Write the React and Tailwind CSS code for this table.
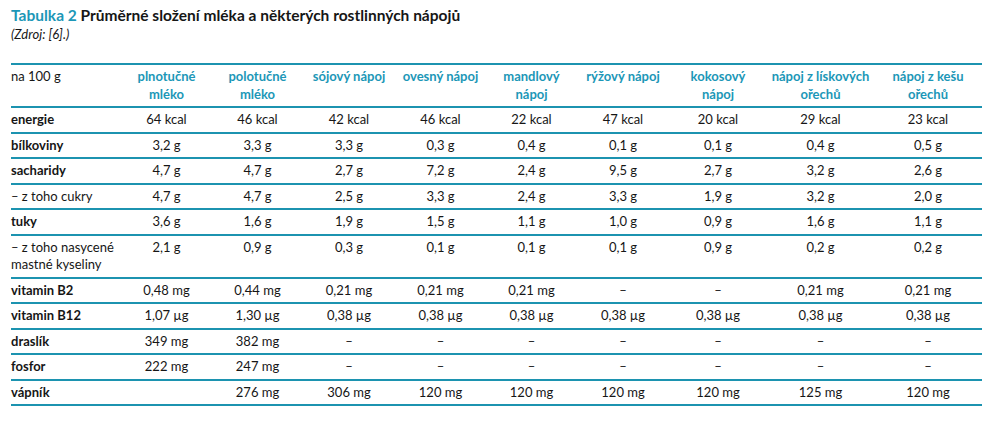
import React from "react";

const cols = [
  ["plnotučné", "mléko"],
  ["polotučné", "mléko"],
  ["sójový nápoj"],
  ["ovesný nápoj"],
  ["mandlový", "nápoj"],
  ["rýžový nápoj"],
  ["kokosový", "nápoj"],
  ["nápoj z lískových", "ořechů"],
  ["nápoj z kešu", "ořechů"],
];

const widths = [110, 91, 91, 92, 91, 91, 92, 98, 107, 108];

const rows = [
  { label: "energie", bold: true, v: ["64 kcal", "46 kcal", "42 kcal", "46 kcal", "22 kcal", "47 kcal", "20 kcal", "29 kcal", "23 kcal"] },
  { label: "bílkoviny", bold: true, v: ["3,2 g", "3,3 g", "3,3 g", "0,3 g", "0,4 g", "0,1 g", "0,1 g", "0,4 g", "0,5 g"] },
  { label: "sacharidy", bold: true, v: ["4,7 g", "4,7 g", "2,7 g", "7,2 g", "2,4 g", "9,5 g", "2,7 g", "3,2 g", "2,6 g"] },
  { label: "– z toho cukry", bold: false, v: ["4,7 g", "4,7 g", "2,5 g", "3,3 g", "2,4 g", "3,3 g", "1,9 g", "3,2 g", "2,0 g"] },
  { label: "tuky", bold: true, v: ["3,6 g", "1,6 g", "1,9 g", "1,5 g", "1,1 g", "1,0 g", "0,9 g", "1,6 g", "1,1 g"] },
  { label: ["– z toho nasycené", "mastné kyseliny"], bold: false, v: ["2,1 g", "0,9 g", "0,3 g", "0,1 g", "0,1 g", "0,1 g", "0,9 g", "0,2 g", "0,2 g"] },
  { label: "vitamin B2", bold: true, v: ["0,48 mg", "0,44 mg", "0,21 mg", "0,21 mg", "0,21 mg", "–", "–", "0,21 mg", "0,21 mg"] },
  { label: "vitamin B12", bold: true, v: ["1,07 µg", "1,30 µg", "0,38 µg", "0,38 µg", "0,38 µg", "0,38 µg", "0,38 µg", "0,38 µg", "0,38 µg"] },
  { label: "draslík", bold: true, v: ["349 mg", "382 mg", "–", "–", "–", "–", "–", "–", "–"] },
  { label: "fosfor", bold: true, v: ["222 mg", "247 mg", "–", "–", "–", "–", "–", "–", "–"] },
  { label: "vápník", bold: true, v: ["", "276 mg", "306 mg", "120 mg", "120 mg", "120 mg", "120 mg", "125 mg", "120 mg"] },
];

export default function App() {
  return (
    <div
      className="w-[991px] h-[422px] bg-white pl-[11px] pt-[5px] text-[#161616]"
      style={{ fontFamily: "Lato, 'Noto Sans', sans-serif" }}
    >
      <div className="text-[15.5px] leading-[20px] font-bold">
        <span className="text-[#1c97b7]">Tabulka 2</span> Průměrné složení mléka a některých rostlinných nápojů
      </div>
      <div className="text-[13px] leading-[18px] italic">(Zdroj: [6].)</div>
      <table className="mt-[20px] table-fixed border-collapse w-[971px] text-[13px] leading-[17.5px]">
        <colgroup>
          {widths.map((w, i) => (
            <col key={i} style={{ width: w }} />
          ))}
        </colgroup>
        <thead>
          <tr className="border-t-2 border-b-2 border-[#1c93b0] align-top">
            <th className="text-left font-normal py-[3px] px-0">na 100 g</th>
            {cols.map((c, i) => (
              <th key={i} className="font-bold text-[#1c97b7] py-[3px] px-0 text-center">
                {c.map((l, j) => (
                  <div key={j}>{l}</div>
                ))}
              </th>
            ))}
          </tr>
        </thead>
        <tbody>
          {rows.map((r, i) => (
            <tr key={i} className="border-b-2 border-[#1c93b0] align-top">
              <td className={`text-left py-[3px] px-0 ${r.bold ? "font-bold" : ""}`}>
                {Array.isArray(r.label) ? r.label.map((l, j) => <div key={j}>{l}</div>) : r.label}
              </td>
              {r.v.map((v, j) => (
                <td key={j} className="text-center py-[3px] px-0">
                  {v}
                </td>
              ))}
            </tr>
          ))}
        </tbody>
      </table>
    </div>
  );
}
